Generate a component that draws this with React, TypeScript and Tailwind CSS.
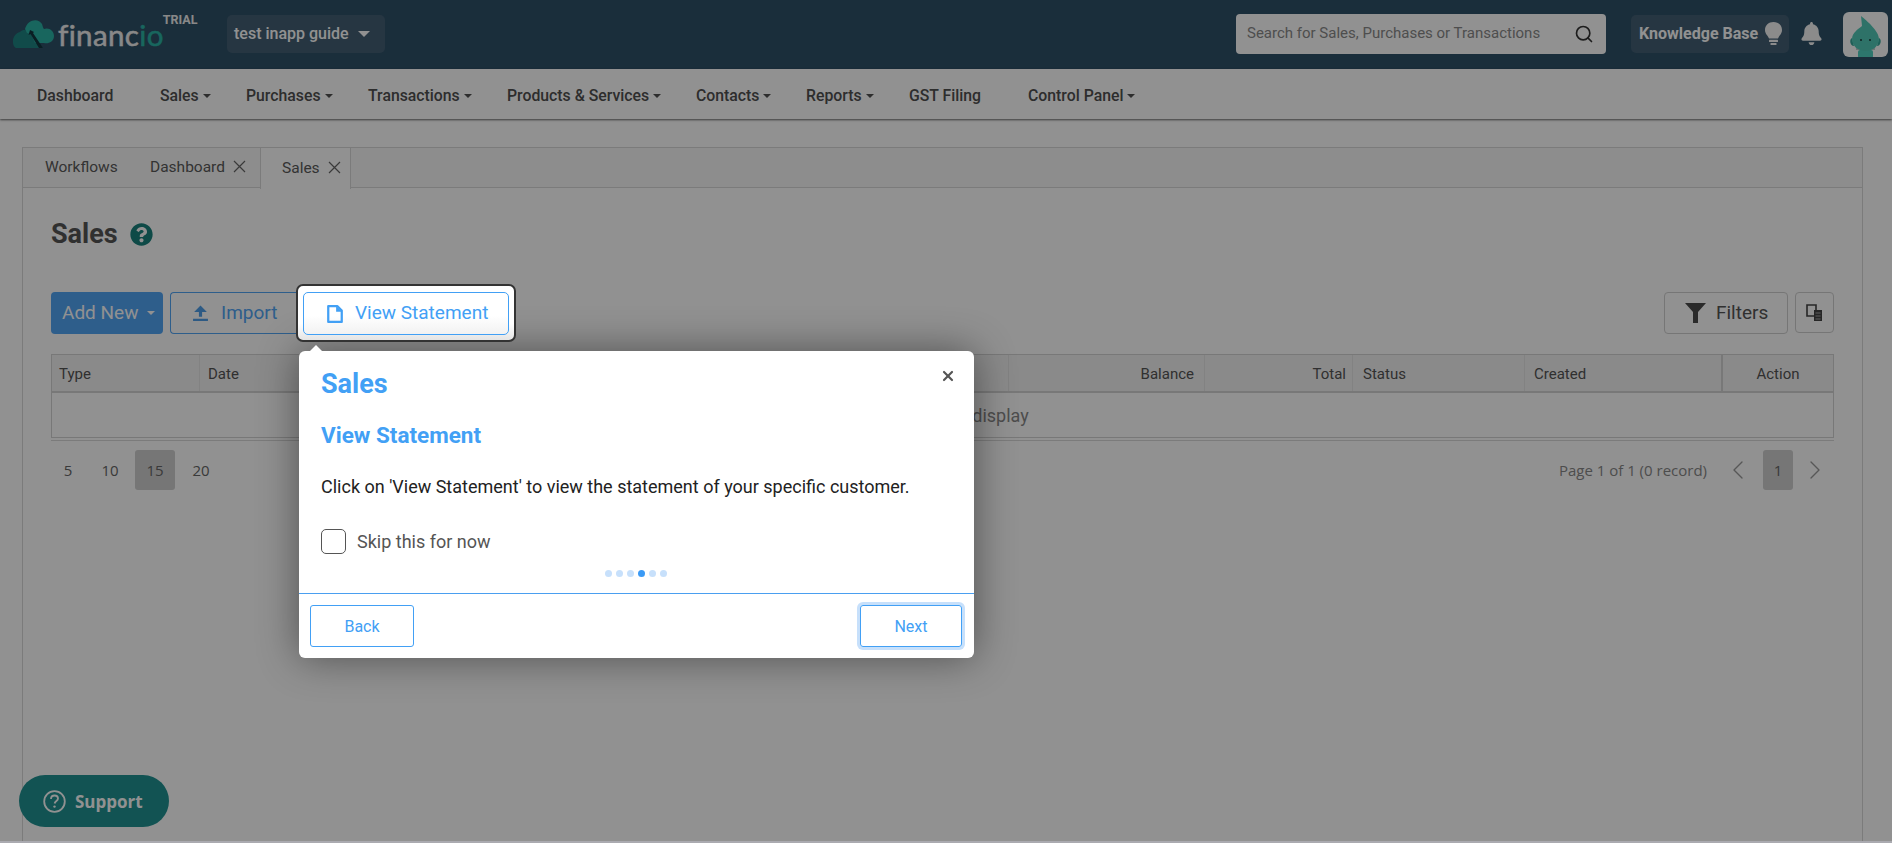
import React from "react";
import { FaBell, FaQuestionCircle } from "react-icons/fa";
import { Search, ChevronLeft, ChevronRight, X } from "lucide-react";

function Caret({ className }: { className: string }) {
  return <span className={"inline-block w-0 h-0 border-x-[4px] border-x-transparent border-t-[4px] " + className} />;
}

function Logo() {
  return (
    <div className="flex items-start w-[185px] shrink-0">
      <svg width="42" height="31" viewBox="0 0 42 31" className="mt-[18px] shrink-0">
        <path d="M3 30 C-2 27 -1 16 7 14 C10 11 14 12 16 14 L30 30 Z" fill="#1f8583" />
        <path d="M12 11 C14 2 25 -1 29 6 C30 9 30 10 31 11 C36 9 41 13 41 18 C41 24 35 26 31 25 L22 25 L18 16 L14 15 Z" fill="#2bb3a6" />
        <path d="M17 12 L21 14 L20 15 L30 30 L26 30 L17.5 16 L15.5 17 Z" fill="#12353f" />
      </svg>
      <div className="mt-[20px] ml-[3px] text-[29.5px] leading-[30px] tracking-[0.35px] font-['Lato',sans-serif] text-[#efefef] whitespace-nowrap [-webkit-text-stroke:0.5px_#efefef]">
        financ<span className="text-[#2bb3a6] [-webkit-text-stroke:0.5px_#2bb3a6]">io</span>
      </div>
      <div className="-ml-[1px] mt-[12px] text-[12.5px] leading-[16px] font-bold text-[#f0f0f0]">TRIAL</div>
    </div>
  );
}

function Bulb() {
  return (
    <svg width="17" height="23" viewBox="0 0 17 23" className="shrink-0">
      <path d="M8.5 0 C13.5 0 17 3.5 17 8 C17 12 14 13.5 13 16.5 H4 C3 13.5 0 12 0 8 C0 3.5 3.5 0 8.5 0 Z" fill="#f5f5f5" />
      <rect x="4" y="17.8" width="9" height="2.2" rx="0.6" fill="#f5f5f5" />
      <rect x="5.5" y="21" width="6" height="2" rx="0.6" fill="#f5f5f5" />
    </svg>
  );
}

function Avatar() {
  return (
    <div className="w-[45px] h-[45px] rounded-[6px] bg-white overflow-hidden ml-[20px] shrink-0">
      <svg width="45" height="45" viewBox="0 0 45 45">
        <path d="M9 26 C6 27 7 34 11 34 Z M36 26 C39 27 38 34 34 34 Z" fill="#38a89b" />
        <rect x="15" y="38" width="15" height="8" rx="2" fill="#4fd0c0" />
        <path d="M13 37 L32 37" stroke="#7f9a9a" strokeWidth="1" />
        <path d="M18 4 C24 9 36 19 36 27 C36 34 30 39 22.5 39 C15 39 9 34 9 27 C9 21 15 17 19 14 Z" fill="#52c9b8" />
        <circle cx="18" cy="28" r="1" fill="#1a3a3a" />
        <circle cx="27" cy="28" r="1" fill="#1a3a3a" />
      </svg>
    </div>
  );
}

const navItems: [string, boolean, string][] = [
  ["Dashboard", false, "w-[123px]"],
  ["Sales", true, "w-[86px]"],
  ["Purchases", true, "w-[122px]"],
  ["Transactions", true, "w-[139px]"],
  ["Products & Services", true, "w-[189px]"],
  ["Contacts", true, "w-[110px]"],
  ["Reports", true, "w-[103px]"],
  ["GST Filing", false, "w-[119px]"],
  ["Control Panel", true, "w-[130px]"],
];

function TabX() {
  return (
    <svg width="13" height="13" viewBox="0 0 13 13" className="ml-[8px] -mt-[3px] shrink-0">
      <path d="M1 1 L12 12 M12 1 L1 12" stroke="#666" strokeWidth="1.2" fill="none" />
    </svg>
  );
}

function Tab({ label, close, active, className }: { label: string; close?: boolean; active?: boolean; className: string }) {
  return (
    <div className={"flex items-center text-[15.5px] text-[#5a5a5a] " + className + (active ? " bg-white border-r border-l border-[#d9d9d9] h-[41px] -mb-px" : "")}>
      <span>{label}</span>
      {close && <TabX />}
    </div>
  );
}

function UploadIcon() {
  return (
    <svg width="17" height="18" viewBox="0 0 16 16" className="shrink-0">
      <path d="M8 1 L14 7 L9.5 7 L9.5 11.5 L6.5 11.5 L6.5 7 L2 7 Z M1 13.5 H15 V15.5 H1 Z" fill="#4f9fe8" />
    </svg>
  );
}

function DocIcon() {
  return (
    <svg width="16" height="18" viewBox="0 0 14 16" className="shrink-0">
      <path d="M1 1 H9 L13 5 V15 H1 Z" fill="none" stroke="#42a0f5" strokeWidth="2" strokeLinejoin="round" />
      <path d="M8 1 V6 H13 Z" fill="#42a0f5" />
    </svg>
  );
}

function HeadCell({ className, children }: { className: string; children?: React.ReactNode }) {
  return <div className={"h-full flex items-center pt-[2px] border-r border-[#e4e4e4] text-[15px] text-[#555] shrink-0 " + className}>{children}</div>;
}

function SupportIcon() {
  return (
    <svg width="23" height="23" viewBox="0 0 23 23" className="shrink-0">
      <circle cx="11.5" cy="11.5" r="10.3" fill="none" stroke="#fff" strokeWidth="1.8" />
      <path d="M8 9 C8 6.5 10 5.5 11.6 5.5 C13.8 5.5 15 7 15 8.6 C15 11 12 11 11.6 13.5" fill="none" stroke="#fff" strokeWidth="1.8" />
      <circle cx="11.5" cy="16.6" r="1.2" fill="#fff" />
    </svg>
  );
}

export default function App() {
  return (
    <div className="relative w-full h-[843px] overflow-hidden bg-white font-['Roboto',sans-serif] flex flex-col">
      {/* top bar */}
      <header className="h-[69px] shrink-0 bg-[#2e5168] flex items-center pl-[13px] pr-[4px]">
        <div className="self-start"><Logo /></div>
        <div className="ml-[29px] w-[158px] h-[38px] rounded-[5px] bg-[#435f74] flex items-center pl-[7px] -mt-[2px] text-white font-medium text-[16px]">
          <span className="w-[124px] whitespace-nowrap">test inapp guide</span>
          <Caret className="border-x-[6px]! border-t-[6px]! border-t-white" />
        </div>
        <div className="ml-auto w-[370px] h-[40px] rounded-[4px] bg-white flex items-center pl-[11px] pr-[12px] -mt-[2px]">
          <span className="flex-1 text-[15px] text-[#8a8a8a] whitespace-nowrap">Search for Sales, Purchases or Transactions</span>
          <Search size={20} strokeWidth={2} className="text-[#333]" />
        </div>
        <div className="ml-[25px] w-[158px] h-[38px] rounded-[5px] bg-[#435f74] flex items-center pl-[8px] -mt-[2px] text-white font-bold text-[16px]">
          <span className="w-[126px] whitespace-nowrap">Knowledge Base</span>
          <Bulb />
        </div>
        <FaBell size={23} className="ml-[11px] text-[#f5f5f5] shrink-0 -mt-[2px]" />
        <Avatar />
      </header>

      {/* nav */}
      <nav className="h-[50px] shrink-0 bg-white flex items-center pl-[37px] pt-[3px] shadow-[0_1px_2px_rgba(0,0,0,0.6)] relative">
        {navItems.map(([label, caret, w]) => (
          <div key={label} className={"flex items-center text-[15.8px] font-medium text-[#505050] whitespace-nowrap shrink-0 " + w}>
            <span>{label}</span>
            {caret && <Caret className="ml-[4px] border-t-[#505050]" />}
          </div>
        ))}
      </nav>

      {/* content */}
      <main className="flex-1 min-h-0 pl-[22px] pr-[29px] pt-[28px] flex flex-col">
        <div className="flex-1 border border-b-0 border-[#d9d9d9] flex flex-col min-h-0">
          <div className="h-[40px] shrink-0 bg-[#f8f8f8] border-b border-[#d9d9d9] flex items-start">
            <Tab label="Workflows" className="h-[40px] pl-[22px] w-[105px]" />
            <Tab label="Dashboard" close className="h-[40px] pl-[22px] w-[132px]" />
            <Tab label="Sales" close active className="pl-[21px] w-[91px]" />
          </div>
          <div className="flex-1 min-h-0 pl-[28px] pr-[28px]">
            <div className="h-[92px] flex items-center">
              <h1 className="text-[27px] font-bold text-[#555]">Sales</h1>
              <FaQuestionCircle size={23} className="ml-[12px] text-[#1a827e]" />
            </div>
            <div className="h-[42px] mt-[12px] flex items-start">
              <div className="w-[112px] h-[42px] rounded-[4px] bg-[#52a5f5] flex items-center pl-[11px] text-white text-[19px] shrink-0">
                <span className="w-[85px] whitespace-nowrap">Add New</span>
                <Caret className="border-t-white" />
              </div>
              <div className="ml-[7px] w-[129px] h-[42px] rounded-l-[4px] border border-r-0 border-[#52a5f5] flex items-center pl-[21px] text-[#52a5f5] text-[19px] shrink-0">
                <UploadIcon />
                <span className="ml-[12px]">Import</span>
              </div>
              <div className="relative z-40 ml-[4px] shrink-0">
                <div className="absolute -inset-x-[7px] -top-[8px] -bottom-[7px] rounded-[7px] border-2 border-[#333] bg-[linear-gradient(#fff_70%,#e4e4e4)]" />
                <div className="relative w-[206px] h-[43px] rounded-[5px] border border-[#42a0f5] bg-[linear-gradient(#fff_55%,#f2f2f2)] flex items-center pl-[23px] text-[#42a0f5] text-[19px]">
                  <DocIcon />
                  <span className="ml-[12px] whitespace-nowrap">View Statement</span>
                </div>
              </div>
              <div className="ml-auto w-[124px] h-[42px] rounded-[4px] border border-[#cfcfcf] flex items-center pl-[20px] text-[#555] text-[19px] shrink-0">
                <svg width="21" height="20" viewBox="0 0 21 20" className="shrink-0">
                  <path d="M0 0 H21 L13 9 V20 H8 V9 Z" fill="#4a4a4a" />
                </svg>
                <span className="ml-[10px]">Filters</span>
              </div>
              <div className="ml-[7px] w-[39px] h-[41px] rounded-[4px] border border-[#cfcfcf] flex items-center justify-center shrink-0">
                <svg width="17" height="18" viewBox="0 0 17 18">
                  <path d="M1 1 H10 V12 H1 Z" fill="none" stroke="#444" strokeWidth="1.6" />
                  <path d="M8 6 H16 V17 H8 Z" fill="#444" />
                  <path d="M9.5 9 H14.5 M9.5 12 H14.5 M9.5 15 H14.5" stroke="#aaa" strokeWidth="1" />
                </svg>
              </div>
            </div>

            {/* table */}
            <div className="mt-[20px] border border-[#d4d4d4]">
              <div className="h-[38px] flex bg-[#f3f3f3] border-b-2 border-[#d4d4d4]">
                <HeadCell className="w-[148px] pl-[7px]">Type</HeadCell>
                <HeadCell className="w-[809px] pl-[8px]">Date</HeadCell>
                <HeadCell className="w-[196px] justify-end pr-[10px]">Balance</HeadCell>
                <HeadCell className="w-[148px] justify-end pr-[6px]">Total</HeadCell>
                <HeadCell className="w-[172px] pl-[10px]">Status</HeadCell>
                <HeadCell className="w-[198px] pl-[9px] border-r-2 border-r-[#d4d4d4]">Created</HeadCell>
                <div className="flex-1 flex items-center justify-center pt-[2px] text-[15px] text-[#555]">Action</div>
              </div>
              <div className="h-[44px] flex items-center justify-center text-[18px] text-[#888] pl-[3px]">No records to display</div>
            </div>
            <div className="h-px mt-[2px] bg-[#d9d9d9]" />

            {/* pagination */}
            <div className="mt-[9px] flex items-center h-[40px] font-['Open_Sans',sans-serif] text-[15px] text-[#666]">
              <span className="w-[34px] text-center">5</span>
              <span className="w-[50px] text-center">10</span>
              <span className="w-[40px] h-[40px] rounded-[3px] bg-[#d0d0d0] flex items-center justify-center">15</span>
              <span className="w-[52px] text-center">20</span>
              <span className="ml-auto text-[15px] text-[#888] whitespace-nowrap">Page 1 of 1 (0 record)</span>
              <ChevronLeft size={32} strokeWidth={1} className="ml-[15px] text-[#999]" />
              <span className="ml-[9px] w-[30px] h-[40px] rounded-[3px] bg-[#d0d0d0] flex items-center justify-center">1</span>
              <ChevronRight size={32} strokeWidth={1} className="ml-[6px] mr-[3px] text-[#999]" />
            </div>
          </div>
        </div>
      </main>

      {/* support */}
      <div className="absolute left-[19px] bottom-[16px] w-[150px] h-[52px] rounded-full bg-[#209393] flex items-center pl-[24px] text-white font-['Open_Sans',sans-serif] font-bold text-[17px]">
        <SupportIcon />
        <span className="ml-[9px] pt-[1px]">Support</span>
      </div>

      {/* overlay */}
      <div className="absolute inset-0 z-10 bg-black/[0.43]" />
      <div className="absolute left-0 right-0 bottom-0 h-[2px] z-20 bg-[#aaaab0]" />

      {/* guide popover */}
      <div className="absolute z-30 left-[299px] top-[351px] w-[675px] h-[307px] rounded-[6px] bg-white shadow-[0_0_40px_rgba(0,0,0,0.45)] flex flex-col">
        <span className="absolute -top-[6px] left-[11px] w-0 h-0 border-x-[6px] border-x-transparent border-b-[6px] border-b-white" />
        <X size={16} strokeWidth={3.2} className="absolute top-[17px] right-[18px] text-[#555]" />
        <div className="flex-1 px-[22px] pt-[17px]">
          <div className="text-[27px] leading-[32px] font-bold text-[#42a0f5]">Sales</div>
          <div className="mt-[22px] text-[22.5px] leading-[26px] font-bold text-[#42a0f5]">View Statement</div>
          <div className="mt-[27px] text-[18px] leading-[24px] text-[#222] whitespace-nowrap">Click on 'View Statement' to view the statement of your specific customer.</div>
          <div className="mt-[30px] flex items-center h-[25px]">
            <span className="w-[25px] h-[25px] rounded-[5px] border border-[#555] bg-white shrink-0" />
            <span className="ml-[11px] text-[18px] text-[#555]">Skip this for now</span>
          </div>
          <div className="mt-[16px] flex justify-center gap-[4px] -translate-x-[1px]">
            {[0, 1, 2, 3, 4, 5].map((i) => (
              <span key={i} className={i === 3 ? "w-[7px] h-[7px] rounded-full bg-[#3b9af5]" : "w-[7px] h-[7px] rounded-full bg-[#c7e0fb]"} />
            ))}
          </div>
        </div>
        <div className="h-[65px] shrink-0 border-t-[1.5px] border-[#4a9ff0] flex items-center justify-between pl-[11px] pr-[12px] text-[16px] text-[#42a0f5]">
          <div className="w-[104px] h-[42px] rounded-[3px] border border-[#42a0f5] flex items-center justify-center pt-[2px]">Back</div>
          <div className="w-[102px] h-[42px] rounded-[3px] border border-[#42a0f5] shadow-[0_0_0_3px_#c7e0fb] flex items-center justify-center pt-[2px]">Next</div>
        </div>
      </div>
    </div>
  );
}
